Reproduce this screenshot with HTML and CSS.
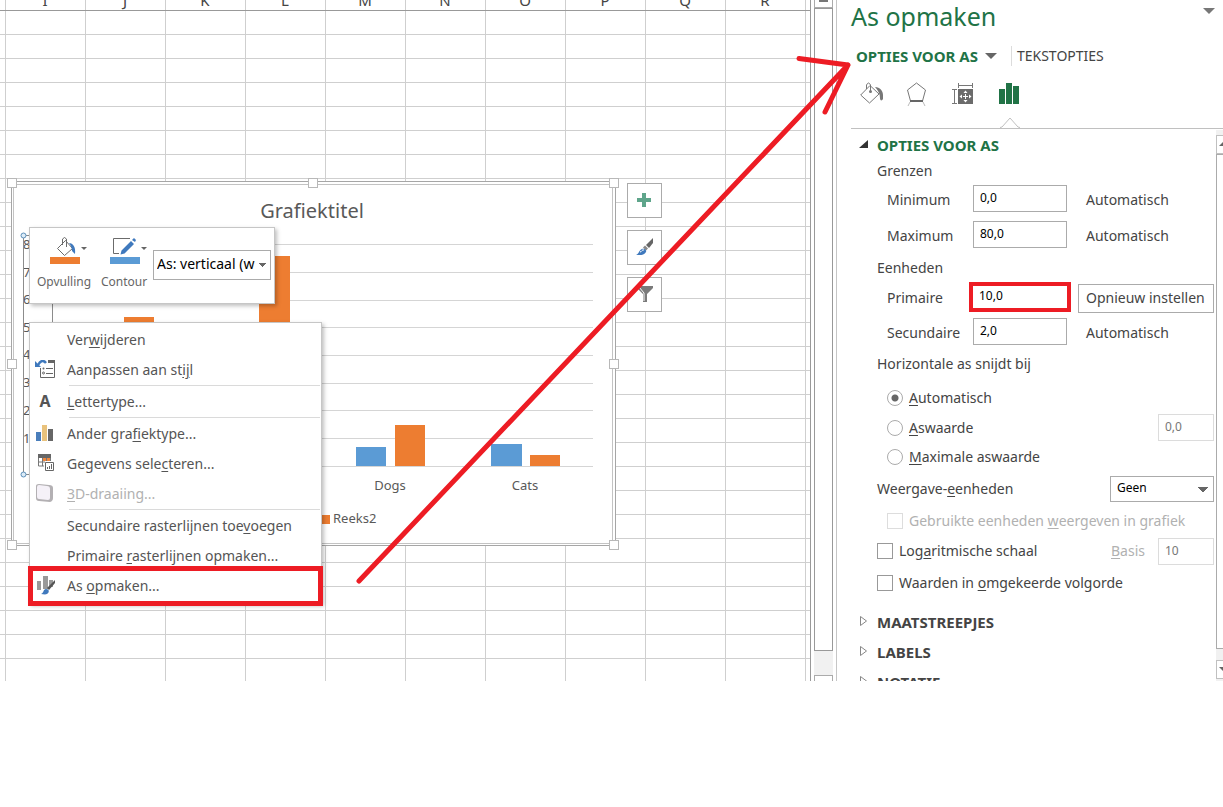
FILE: index.html
```html
<!DOCTYPE html>
<html lang="nl">
<head>
<meta charset="utf-8">
<title>As opmaken</title>
<link rel="stylesheet" href="styles.css">
</head>
<body>
<div class="app">
  <main class="sheet">
    <div class="grid">
      <div class="col-heads"><span>I</span><span>J</span><span>K</span><span>L</span><span>M</span><span>N</span><span>O</span><span>P</span><span>Q</span><span>R</span></div>
      <div class="cells"></div>
    </div>
    <div class="scrollbar">
      <button class="sb-btn sb-up" aria-label="Omhoog"><svg width="17" height="2"><path d="M4 1h9" stroke="#777" stroke-width="2"/></svg></button>
      <div class="sb-thumb"></div>
      <div class="sb-track"></div>
      <button class="sb-btn sb-down" aria-label="Omlaag"></button>
    </div>

    <svg class="chart" viewBox="7 177 613 374" width="613" height="374" role="img" aria-label="Grafiektitel">
      <rect x="11.500" y="181.500" width="604" height="364" fill="#fff" stroke="#a6a6a6"/>
      <rect x="13.500" y="184.500" width="599" height="359" fill="#fff" stroke="#c3c3c3"/>
      <g stroke="#d5d5d5" shape-rendering="crispEdges">
        <path d="M52 244.500H593M52 272.500H593M52 300.500H593M52 327.500H593M52 355.500H593M52 383.500H593M52 410.500H593M52 438.500H593M52 466.500H593"/>
      </g>
      <g fill="#5b9bd5">
        <rect x="85" y="400" width="30" height="66"/><rect x="220" y="400" width="30" height="66"/>
        <rect x="356" y="447" width="30" height="19"/><rect x="491" y="444" width="31" height="22"/>
      </g>
      <g fill="#ed7d31">
        <rect x="124" y="317" width="30" height="149"/><rect x="259" y="256" width="31" height="210"/>
        <rect x="395" y="425" width="30" height="41"/><rect x="530" y="455" width="30" height="11"/>
        <rect x="321" y="515" width="9" height="9"/>
      </g>
      <g class="chart-label">
        <text x="23" y="249">80</text><text x="23" y="277">70</text><text x="23" y="304">60</text><text x="23" y="332">50</text>
        <text x="23" y="359">40</text><text x="23" y="387">30</text><text x="23" y="415">20</text><text x="23" y="443">10</text>
        <text x="390" y="490" text-anchor="middle">Dogs</text>
        <text x="525" y="490" text-anchor="middle">Cats</text>
        <text x="333" y="523">Reeks2</text>
      </g>
      <text class="chart-title" x="312" y="218" text-anchor="middle">Grafiektitel</text>
      <path d="M23.500 235.500H52.500V474.500H23.500Z" fill="none" stroke="#8c8c8c"/>
      <g fill="#dcebf7" stroke="#5b8fb9"><circle cx="23.500" cy="235.500" r="2.500"/><circle cx="23.500" cy="474.500" r="2.500"/></g>
      <g fill="#fff" stroke="#b8b8b8">
        <rect x="7.500" y="178.500" width="9" height="9"/><rect x="308.500" y="178.500" width="9" height="9"/><rect x="609.500" y="178.500" width="9" height="9"/>
        <rect x="7.500" y="359.500" width="9" height="9"/><rect x="609.500" y="359.500" width="9" height="9"/>
        <rect x="7.500" y="540.500" width="9" height="9"/><rect x="609.500" y="540.500" width="9" height="9"/>
      </g>
    </svg>

    <div class="chart-tools">
      <button aria-label="Grafiekelementen"><svg width="33" height="33"><path d="M14 9h4v5h5v4h-5v5h-4v-5H9v-4h5z" fill="#5fa58b"/></svg></button>
      <button aria-label="Grafiekstijlen"><svg width="33" height="33"><path d="M25 7v5l-4 5-3-3z" fill="#666"/><path d="M17 14.500l3 3-2 2-3-3z" fill="#888"/><path d="M8 24c3-1 3-5 6-6 2-1 5 1 4 3-2 4-7 3-10 3z" fill="#3f79bd"/><path d="M12 21c2 0 2-3 4-2" stroke="#fff" fill="none"/></svg></button>
      <button aria-label="Grafiekfilters"><svg width="33" height="33"><path d="M9 8h16v2l-6 6v8h-4v-8L9 10z" fill="#7a7a7a"/><path d="M11 9l5 6v8" stroke="#fff" fill="none"/></svg></button>
    </div>

    <div class="mini-bar">
      <button class="mini-btn">
        <svg width="38" height="30" viewBox="0 0 38 30"><path d="M7.500 12.500l8-8 7 8-8 7z" fill="none" stroke="#6b6b6b"/><path d="M12.500 9V3q2-3 4 0v8" fill="none" stroke="#6b6b6b"/><path d="M19 7c4 0 7 4 6 11l-3-3c0-3-1-5-3-8z" fill="#3f79bd"/><path d="M31 11h6l-3 3z" fill="#666"/><rect y="21" width="30" height="7" fill="#ed7d31"/></svg>
        Opvulling
      </button>
      <button class="mini-btn">
        <svg width="38" height="30" viewBox="0 0 38 30"><path d="M20 2.500H3.500v15H9" fill="none" stroke="#6b6b6b"/><path d="M21 5l3 3-9.500 9.500-4 1 1-4zM22 4l2-2 2 2-1 2z" fill="#3f79bd"/><path d="M31 11h6l-3 3z" fill="#666"/><rect y="21" width="30" height="7" fill="#5b9bd5"/></svg>
        Contour
      </button>
      <select class="mini-select" aria-label="Grafiekelement"><option>As: verticaal (w</option></select>
    </div>

    <div class="menu" role="menu">
      <button class="item" role="menuitem"><span class="ico"></span><span>Ver<u>w</u>ijderen</span></button>
      <button class="item" role="menuitem"><svg class="ico" viewBox="0 0 20 20"><path d="M13 0h7v3h-7z" fill="#666"/><path d="M5.500 8v9.500h14V3" fill="none" stroke="#666"/><path d="M11 8.500h7M11 13.500h7" stroke="#666"/><circle cx="8.500" cy="8.500" r="1" fill="#666"/><circle cx="8.500" cy="13" r="1" fill="none" stroke="#666"/><path d="M3 5Q7-2 11 3" fill="none" stroke="#3f79bd" stroke-width="2.500"/><path d="M0 1v6h6z" fill="#3f79bd"/></svg><span>Aanpassen aan st<u>ij</u>l</span></button>
      <hr>
      <button class="item" role="menuitem"><span class="ico ico-letter" aria-hidden="true">A</span><span><u>L</u>ettertype...</span></button>
      <hr>
      <button class="item" role="menuitem"><svg class="ico" viewBox="0 0 20 20"><path d="M1 8h5v9H1z" fill="#4a7ebb"/><path d="M7 1h5v16H7z" fill="#e9c27c"/><path d="M13 5h5v12h-5z" fill="#666"/></svg><span>Ander gra<u>f</u>iektype...</span></button>
      <button class="item" role="menuitem"><svg class="ico" viewBox="0 0 20 20"><path d="M3 0h13v4H3z" fill="#666"/><path d="M3.500 4v8H9M15.500 4v3M3 8h7M7.500 4v8M11.500 4v3" fill="none" stroke="#777"/><path d="M8 4h3v3H8zM12 4h3v3h-3z" fill="#f0883e"/><path d="M10.500 8.500h8v8h-8z" fill="#fff" stroke="#666"/><path d="M12.500 15v-2M14.500 15v-3M16.500 15v-5" stroke="#666"/></svg><span>Gegevens sele<u>c</u>teren...</span></button>
      <button class="item" role="menuitem" disabled><svg class="ico" viewBox="0 0 20 20"><path d="M1 2q0-2 3-2l10 1q4 0 4 3v10q0 3-3 4l-11-1q-3 0-3-3z" fill="#b3b0b3"/><path d="M2 3q0-2 2-2l8 1q3 0 3 3v9q0 2-2 2l-9-1q-2 0-2-2z" fill="#f5f1f8"/></svg><span><u>3</u>D-draaiing...</span></button>
      <hr>
      <button class="item" role="menuitem"><span class="ico"></span><span>Secundaire rasterlijnen toe<u>v</u>oegen</span></button>
      <button class="item" role="menuitem"><span class="ico"></span><span>Primaire <u>r</u>asterlijnen opmaken...</span></button>
      <button class="item item-marked" role="menuitem"><svg class="ico" viewBox="0 0 20 20"><path d="M2 5h4v9H2zM8 0h5v13H8zM14 4h4v7h-4z" fill="#999"/><path d="M20 4v3l-6 7-2-2z" fill="#555"/><path d="M6 18c3-1 2-5 5-5 3 0 4 3 1 5-2 1-4 0-6 0z" fill="#3f79bd"/></svg><span>As <u>o</u>pmaken...</span></button>
    </div>
  </main>

  <aside class="pane">
    <header class="pane-head">
      <h1>As opmaken</h1>
      <button class="pane-menu" aria-label="Opties taakvenster"><svg width="12" height="6"><path d="M0 0h12l-6 6z" fill="#777"/></svg></button>
    </header>
    <div class="tabs">
      <button class="tab tab-on">OPTIES VOOR AS <svg width="12" height="6"><path d="M0 0h12l-6 6z" fill="#666"/></svg></button>
      <button class="tab">TEKSTOPTIES</button>
    </div>
    <div class="icon-tabs">
      <button aria-label="Opvulling en lijn"><svg width="24" height="24" viewBox="0 0 24 24"><path d="M.7 13L10 3.500 19 12 9.500 21z" fill="none" stroke="#777"/><path d="M6.500 7V3q2-4 4 0v6" fill="none" stroke="#777"/><circle cx="10.500" cy="9.500" r="1.500" fill="#777"/><path d="M15 5c5 0 8 4 8 8v4c-1 2-3 2-3-1 0-4-2-8-5-11z" fill="#777"/></svg></button>
      <button aria-label="Effecten"><svg width="24" height="24" viewBox="0 0 24 24"><path d="M10.500 1L19.500 8l-3 11H4.500L1.500 8z" fill="none" stroke="#777"/><path d="M4 19h13" stroke="#666" stroke-width="2"/><path d="M4 20l-2 4M17 20l2 4" stroke="#bbb"/></svg></button>
      <button aria-label="Grootte en eigenschappen"><svg width="24" height="24" viewBox="0 0 24 24"><path d="M6.500 1v5M20.500 1v5M6 3.500h15M0 7.500h5M0 21.500h5M2.500 7v15" fill="none" stroke="#777"/><path d="M6 7h15v15H6z" fill="#6b6b6b"/><path d="M13.500 8.500l2 2.500h-4zM13.500 20.500l2-2.500h-4zM7.500 14.500l2.500-2v4zM19.500 14.500l-2.500-2v4z" fill="#fff"/><path d="M13 12h1v2h2v1h-2v2h-1v-2h-2v-1h2z" fill="#fff"/></svg></button>
      <button aria-label="Opties voor as"><svg width="24" height="24" viewBox="0 0 24 24"><path d="M1 7h6v15H1zM8 1h6v21H8zM15 4h6v18h-6z" fill="#217346"/></svg></button>
    </div>
    <div class="rule"><svg width="20" height="11"><path d="M0 10.500L2 10 10 1l8 9 2 .5" fill="#fff" stroke="#c0c0c0"/></svg></div>

    <div class="pane-body">
      <div class="fields">
        <button class="section section-on"><svg width="9" height="10"><path d="M9 0v8H0z" fill="#333"/></svg>OPTIES VOOR AS</button>
        <p class="group">Grenzen</p>
        <div class="row value"><label for="min">Minimum</label><input id="min" type="text" value="0,0"><span>Automatisch</span></div>
        <div class="row value"><label for="max">Maximum</label><input id="max" type="text" value="80,0"><span>Automatisch</span></div>
        <p class="group group-units">Eenheden</p>
        <div class="row value major"><label for="maj">Primaire</label><input id="maj" class="marked" type="text" value="10,0"><button class="reset">Opnieuw instellen</button></div>
        <div class="row value minor"><label for="sec">Secundaire</label><input id="sec" type="text" value="2,0"><span>Automatisch</span></div>
        <p class="group">Horizontale as snijdt bij</p>
        <div class="radios">
          <div class="row"><label class="pick"><input type="radio" name="cross" checked><span><u>A</u>utomatisch</span></label></div>
          <div class="row"><label class="pick"><input type="radio" name="cross"><span><u>A</u>swaarde</span></label><input class="short" type="text" value="0,0" aria-label="Aswaarde" disabled></div>
          <div class="row"><label class="pick"><input type="radio" name="cross"><span><u>M</u>aximale aswaarde</span></label></div>
        </div>
        <div class="row tall"><label for="unit">Weergave-<u>e</u>enheden</label><select id="unit" class="units"><option>Geen</option></select></div>
        <div class="row inset"><label class="pick off"><input type="checkbox" disabled><span>Gebruikte eenheden <u>w</u>eergeven in grafiek</span></label></div>
        <div class="row check"><label class="pick"><input type="checkbox"><span>Log<u>a</u>ritmische schaal</span></label><label class="base off" for="base"><u>B</u>asis</label><input id="base" class="short" type="text" value="10" disabled></div>
        <div class="row check"><label class="pick"><input type="checkbox"><span>Waarden in <u>o</u>mgekeerde volgorde</span></label></div>
        <div class="more">
          <button class="section"><svg width="9" height="14"><path d="M1.500 1.500v9l6-4.500z" fill="#fff" stroke="#888"/></svg>MAATSTREEPJES</button>
          <button class="section"><svg width="9" height="14"><path d="M1.500 1.500v9l6-4.500z" fill="#fff" stroke="#888"/></svg>LABELS</button>
          <button class="section"><svg width="9" height="14"><path d="M1.500 1.500v9l6-4.500z" fill="#fff" stroke="#888"/></svg>NOTATIE</button>
        </div>
      </div>
      <div class="pane-scroll">
        <button class="ps-btn" aria-label="Omhoog"><svg width="6" height="5"><path d="M6 0v4H2z" fill="#666"/></svg></button>
        <div class="ps-thumb"></div>
        <div class="ps-track"></div>
        <button class="ps-btn" aria-label="Omlaag"><svg width="6" height="5"><path d="M2 0h4v4z" fill="#666"/></svg></button>
      </div>
    </div>
  </aside>

  <svg class="arrow" width="860" height="600" aria-hidden="true"><path d="M359 581L848 65M799 58.500L848 65L825 112" fill="none" stroke="#ed1c24" stroke-width="5" stroke-linecap="round" stroke-linejoin="round"/></svg>
</div>
</body>
</html>
```
FILE: styles.css
```css
* { box-sizing: border-box; }

body {
  margin: 0;
  height: 100vh;
  padding-bottom: 126px;
  background: #fff;
  color: #444;
  font: 14px/20px "Noto Sans", "Open Sans", sans-serif;
}

button, input, select { font: inherit; color: inherit; margin: 0; }
button { background: none; border: 0; padding: 0; text-align: left; }
h1, p, hr { margin: 0; }
svg { display: block; flex: none; }
u { text-underline-offset: 2px; text-decoration-thickness: 1px; }

.app { position: relative; display: flex; height: 100%; overflow: hidden; }

/* Worksheet */
.sheet { position: relative; flex: 1; display: flex; min-width: 0; padding-right: 3px; overflow: hidden; }
.grid { flex: 1; display: flex; flex-direction: column; margin-right: 3px; border-right: 1px solid #999; min-width: 0; }
.col-heads {
  display: flex;
  align-items: flex-end;
  height: 11px;
  padding-left: 5px;
  overflow: hidden;
  border-bottom: 1px solid #999;
  background: repeating-linear-gradient(90deg, #cfcfcf 0 1px, transparent 1px 80px) 5px 0;
}
.col-heads span { flex: 0 0 80px; text-align: center; font-size: 15px; line-height: 20px; }
.cells {
  flex: 1;
  background:
    repeating-linear-gradient(90deg, #cfcfcf 0 1px, transparent 1px 80px) 5px 0,
    repeating-linear-gradient(180deg, transparent 0 23px, #cfcfcf 23px 24px);
}
.scrollbar { display: flex; flex-direction: column; width: 19px; background: #f1f1f1; }
.sb-btn { height: 8px; background: #fff; border: 1px solid #ababab; }
.sb-up { border-top: 0; display: flex; align-items: flex-start; }
.sb-down { border-bottom: 0; height: 6px; }
.sb-thumb { flex: 1; background: #fff; border: 1px solid #999; }
.sb-track { height: 24px; }

/* Chart */
.chart { position: absolute; left: 7px; top: 177px; }
.chart-label { font-size: 13px; fill: #595959; }
.chart-title { font-size: 20px; fill: #595959; }
.chart-tools { position: absolute; left: 627px; top: 183px; display: flex; flex-direction: column; gap: 12px; }
.chart-tools button { width: 35px; height: 35px; background: #fff; border: 1px solid #ababab; }

/* Floating toolbar and context menu */
.mini-bar, .menu { position: absolute; background: #fff; border: 1px solid #c6c6c6; box-shadow: 2px 2px 4px rgba(0, 0, 0, .25); }
.mini-bar { left: 29px; top: 227px; display: flex; width: 246px; height: 77px; padding: 8px 3px 0 4px; }
.mini-btn { width: 60px; display: flex; flex-direction: column; align-items: center; gap: 6px; font-size: 12px; line-height: 20px; color: #666; }
.mini-btn svg { margin-left: 9px; }

select {
  appearance: none;
  border: 1px solid #ababab;
  border-radius: 0;
  color: #000;
  background: conic-gradient(from 315deg at 50% 100%, #666 90deg, transparent 0) no-repeat right 5px center / 10px 5px, #fff;
}
.mini-select { width: 118px; height: 30px; margin: 14px 0 0 -1px; padding: 0 14px 2px 3px; background-position: right 4px center; background-size: 7px 4px; }

.menu { left: 29px; top: 322px; width: 293px; padding: 2px 3px; }
.item { display: flex; align-items: center; gap: 12px; width: 100%; height: 30px; padding-left: 2px; color: #555; white-space: nowrap; }
.item:disabled { color: #b1b1b1; }
.item-marked { outline: 5px solid #ed1c24; }
.ico { width: 20px; height: 20px; flex: none; }
.ico-letter { text-align: center; font-weight: bold; font-size: 16px; line-height: 18px; }
.menu hr { border: 0; height: 2px; margin: 0 -2px 0 36px; border-top: 1px solid #dadada; }

/* Task pane */
.pane { width: 387px; flex: none; display: flex; flex-direction: column; padding-left: 14px; border-left: 1px solid #c6c6c6; }
.pane-head { display: flex; justify-content: space-between; align-items: flex-start; height: 40px; padding-right: 8px; }
.pane-head h1 { color: #217346; font-size: 25px; line-height: 32px; font-weight: 400; }
.pane-menu { padding-top: 8px; }
.tabs { display: flex; height: 32px; align-items: center; padding-left: 5px; }
.tab-on { display: flex; align-items: center; gap: 7px; color: #217346; font-size: 15px; font-weight: bold; padding-right: 14px; border-right: 1px solid #dcdcdc; }
.tab:last-child { padding-left: 5px; }
.icon-tabs { display: flex; align-items: flex-start; gap: 22px; height: 45px; padding: 10px 0 0 9px; }
.rule { height: 12px; padding-left: 149px; border-bottom: 1px solid #c0c0c0; }
.rule svg { height: 12px; }

.pane-body { flex: 1; display: flex; min-height: 0; overflow: hidden; padding-top: 1px; }
.fields { flex: 1; padding-right: 2px; }
.section { display: flex; align-items: center; gap: 9px; width: 100%; height: 30px; padding-left: 8px; font-size: 15px; font-weight: bold; }
.section-on { color: #217346; }
.fields p, .row { margin-left: 26px; }
.group { line-height: 22px; }
.group-units { line-height: 30px; }
.row { display: flex; align-items: center; height: 30px; }
.value { height: 36px; }
.value + .value { height: 35px; }
.value label { width: 96px; padding-left: 10px; }
.value input { width: 94px; margin: 0 19px 3px 0; }
.fields .major { height: 30px; }
.fields .minor { height: 40px; }
input[type="text"] { height: 27px; padding: 0 6px 2px; border: 1px solid #ababab; color: #000; font-size: 12px; background: #fff; }
.value .marked { border: 0; outline: 4px solid #ed1c24; height: 22px; }
.value .marked + .reset { margin-left: -8px; }
.reset { flex: 1; height: 29px; border: 1px solid #ababab; padding-left: 7px; white-space: nowrap; }
.radios { padding: 8px 0 0 10px; }
.radios .row:nth-child(2) { height: 29px; }
.pick { display: flex; align-items: center; gap: 6px; flex: 1; white-space: nowrap; }
.pick input { appearance: none; width: 16px; height: 16px; border: 1px solid #999; background: #fff; }
.pick input[type="radio"] { border-radius: 50%; border-color: #ababab; }
.pick input[type="radio"]:checked { background: radial-gradient(circle, #666 0 3px, #fff 4px); }
.off { color: #b1b1b1; }
.off input { border-color: #ddd; }
input.short { width: 56px; border-color: #dcdcdc; color: #777; }
.base { margin-right: 13px; }
.tall { height: 34px; justify-content: space-between; }
.units { width: 104px; height: 26px; font-size: 12px; padding: 0 16px 2px 6px; }
.fields .inset { height: 29px; margin-left: 36px; }
.check { height: 32px; }
.more { padding-top: 8px; }

.pane-scroll { width: 7px; flex: none; overflow: hidden; display: flex; flex-direction: column; padding: 5px 0 2px; background: #f1f1f1; }
.ps-btn { height: 19px; border: 1px solid #c0c0c0; border-right: 0; background: #fff; }
.ps-thumb { flex: 1; background: #fff; border: 1px solid #ababab; border-right: 0; }
.ps-track { height: 11px; }

.arrow { position: absolute; left: 0; top: 0; pointer-events: none; }
```
